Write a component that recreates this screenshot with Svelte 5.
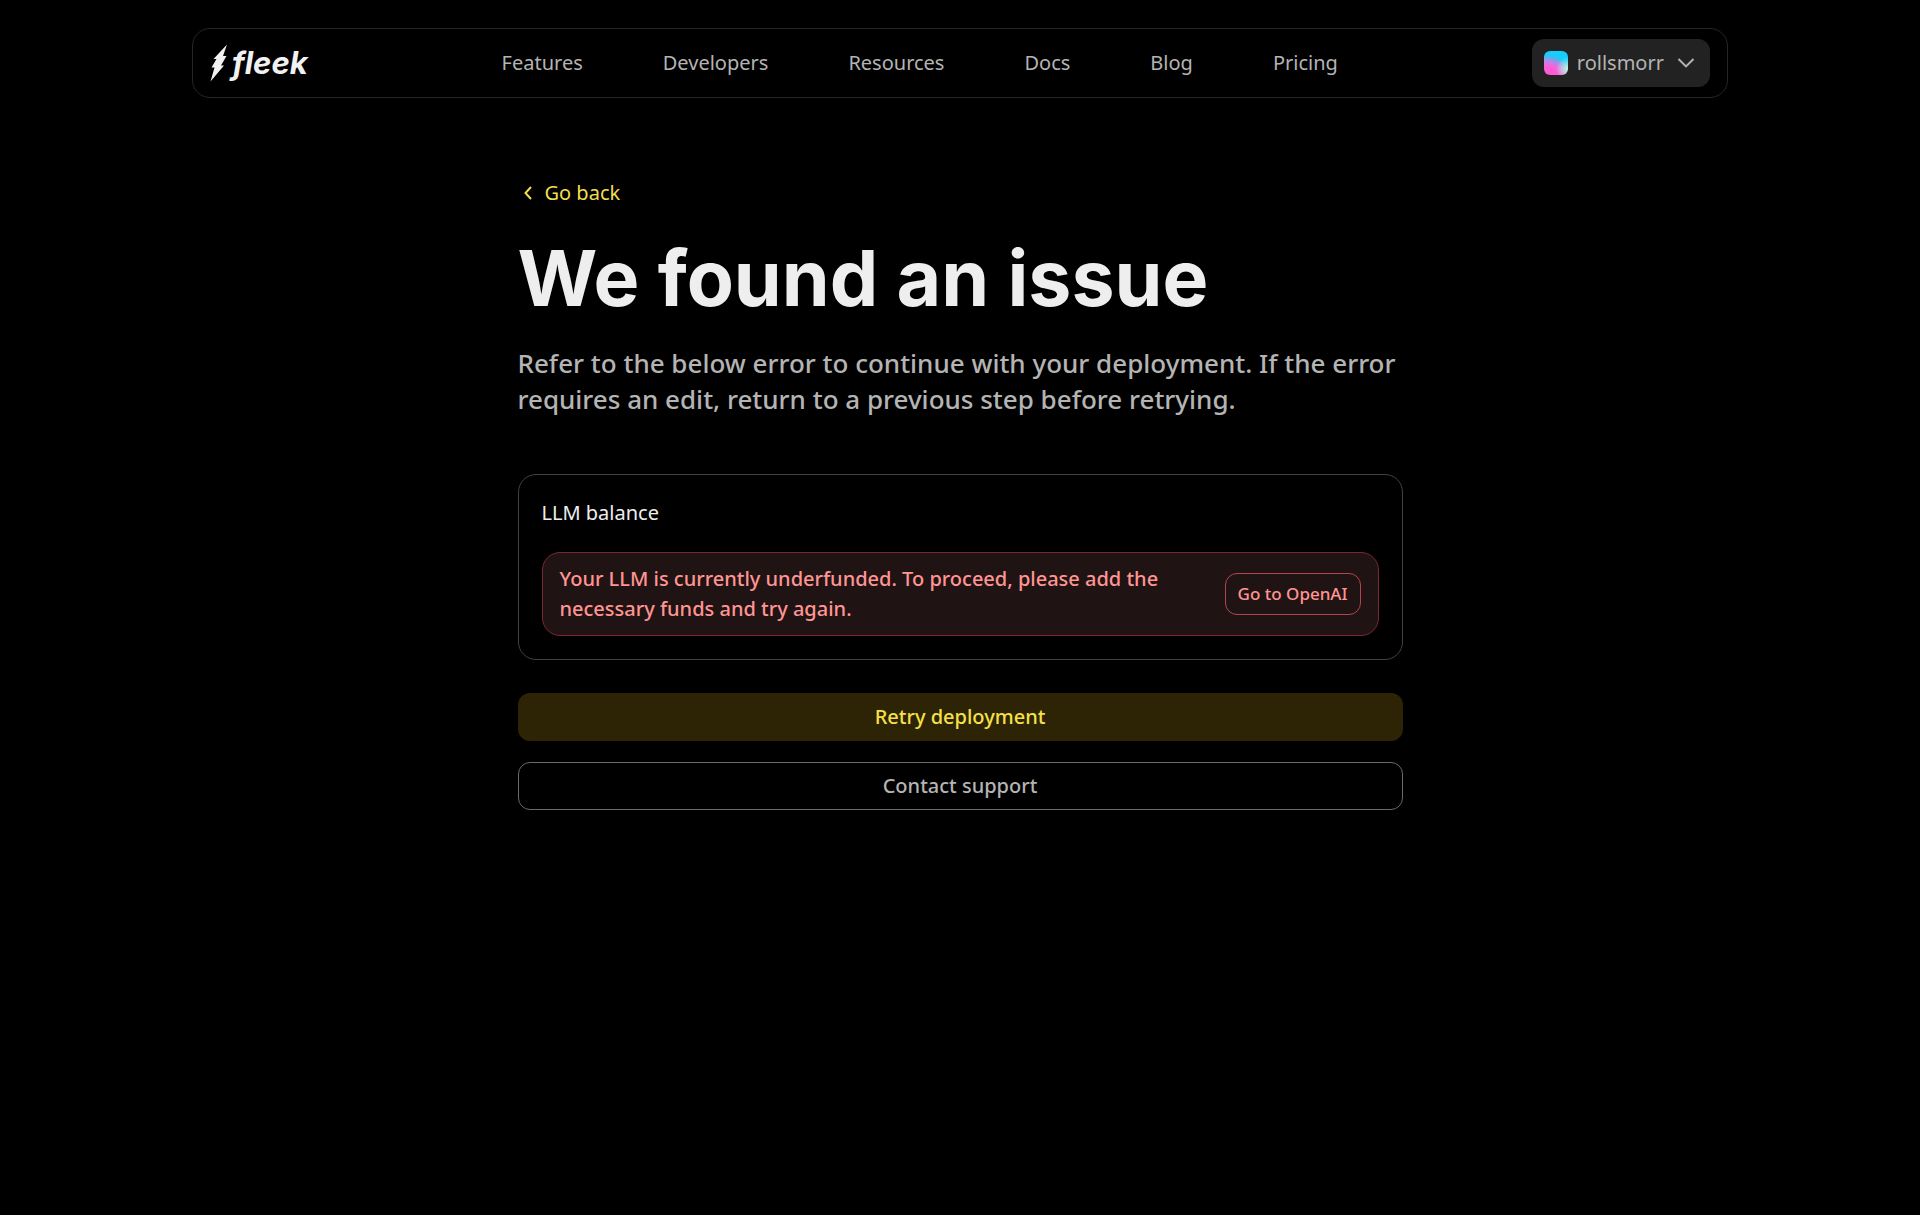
<script>
  const links = ['Features', 'Developers', 'Resources', 'Docs', 'Blog', 'Pricing'];
</script>

<div class="page">
  <header class="bar">
    <a class="logo" href="/" aria-label="fleek home">
      <svg width="18" height="38" viewBox="0 0 18 38" aria-hidden="true">
        <path d="M17 0.5 L3.5 15 H6.5 L1.5 23.5 H4.5 L0.5 37.5 L14 21.5 H11 L16.5 12 H13 Z" fill="#f1f1f1" />
      </svg>
      <span>fleek</span>
    </a>
    <nav class="links" aria-label="Main">
      {#each links as link}
        <a href="/{link.toLowerCase()}">{link}</a>
      {/each}
    </nav>
    <button class="account" type="button" aria-haspopup="menu">
      <span class="avatar"></span>
      <span>rollsmorr</span>
      <svg width="18" height="10" viewBox="0 0 18 10" aria-hidden="true">
        <path d="M1.5 1 L9 8.4 L16.5 1" fill="none" stroke="currentColor" stroke-width="2" />
      </svg>
    </button>
  </header>

  <main>
    <a class="back" href="/back">
      <svg width="8" height="14" viewBox="0 0 8 14" aria-hidden="true">
        <path d="M7 1 L1.5 7 L7 13" fill="none" stroke="currentColor" stroke-width="2" />
      </svg>
      <span>Go back</span>
    </a>
    <h1>We found an issue</h1>
    <p class="lead">
      Refer to the below error to continue with your deployment. If the error requires an edit,
      return to a previous step before retrying.
    </p>

    <section class="card">
      <h2>LLM balance</h2>
      <div class="alert" role="alert">
        <p>Your LLM is currently underfunded. To proceed, please add the necessary funds and try again.</p>
        <button type="button">Go to OpenAI</button>
      </div>
    </section>

    <div class="actions">
      <button class="retry" type="button">Retry deployment</button>
      <button class="support" type="button">Contact support</button>
    </div>
  </main>
</div>

<style>
  :global(body) {
    margin: 0;
    background: #000;
  }
  .page {
    box-sizing: border-box;
    min-height: 100vh;
    padding: 28px 24px;
    background: #000;
    color: #b4b4b4;
    font: 400 20px/30px 'Noto Sans', sans-serif;
  }
  a {
    color: inherit;
    text-decoration: none;
  }
  button {
    box-sizing: border-box;
    margin: 0;
    border: 1px solid transparent;
    border-radius: 12px;
    background: none;
    color: inherit;
    font: inherit;
    cursor: pointer;
  }
  .bar {
    box-sizing: border-box;
    display: flex;
    align-items: center;
    justify-content: space-between;
    max-width: 1536px;
    margin: 0 auto;
    padding: 10px 17px;
    border: 1px solid #262626;
    border-radius: 18px;
  }
  .logo {
    display: flex;
    align-items: center;
    gap: 4px;
    color: #f1f1f1;
    font: italic 700 31px/40px Inter, sans-serif;
  }
  .links {
    display: flex;
    gap: 80px;
  }
  .account {
    display: flex;
    align-items: center;
    gap: 9px;
    height: 48px;
    padding: 0 14px 0 11px;
    background: #222;
  }
  .account svg {
    margin-left: 4px;
  }
  .avatar {
    width: 24px;
    height: 24px;
    border-radius: 6px;
    background:
      radial-gradient(circle at 100% 75%, #c4f5dc 0, transparent 40%),
      radial-gradient(circle at 25% 95%, #ff5ad4 20%, transparent 65%),
      linear-gradient(200deg, #16cdfb 35%, #b79bf0 65%, #f46ad6);
  }
  main {
    max-width: 885px;
    margin: 80px auto 0;
  }
  .back {
    display: inline-flex;
    align-items: center;
    gap: 13px;
    padding-left: 6px;
    color: #f0df4e;
  }
  h1 {
    margin: 28px 0 25px;
    color: #eee;
    font: 700 77px/84px Inter, sans-serif;
  }
  .lead {
    margin: 0 0 57px;
    font-size: 26px;
    font-weight: 500;
    line-height: 36px;
  }
  .card {
    padding: 23px;
    border: 1px solid #424242;
    border-radius: 18px;
  }
  h2 {
    margin: 0 0 24px;
    color: #eee;
    font: inherit;
  }
  .alert {
    display: flex;
    align-items: center;
    justify-content: space-between;
    gap: 48px;
    padding: 11px 17px;
    border: 1px solid #7d2636;
    border-radius: 18px;
    background: #201314;
    color: #ff9592;
    font-weight: 500;
  }
  .alert p {
    margin: 0;
  }
  .alert button {
    flex: none;
    height: 42px;
    padding: 0 12px;
    border-color: #b5454c;
    font-size: 17px;
  }
  .actions {
    display: grid;
    gap: 21px;
    margin-top: 33px;
  }
  .actions button {
    height: 48px;
    font-weight: 500;
  }
  .retry {
    background: #2d2305;
    color: #f5e147;
  }
  .support {
    border-color: #6a6a6a;
  }
</style>
